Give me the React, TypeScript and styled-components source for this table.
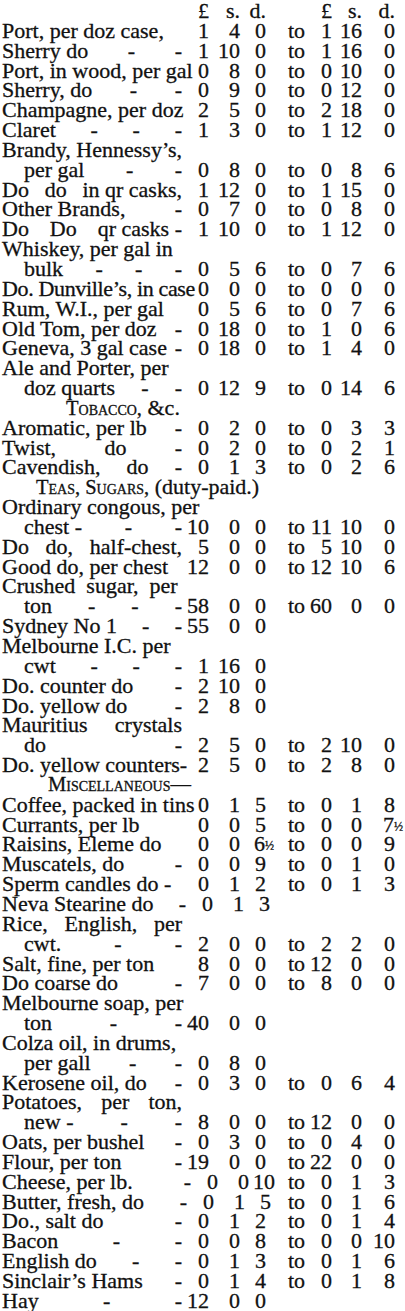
import React from "react";
import styled, { createGlobalStyle } from "styled-components";

const Global = createGlobalStyle`
  html, body { margin: 0; padding: 0; background: #ffffff; }
  body { font-family: "Liberation Serif", "Times New Roman", serif; color: #111111; }
`;

const Page = styled.div`
  width: 405px;
  padding: 1px 0 0 2px;
  box-sizing: border-box;
  font-size: 22px;
  line-height: 19.85px;
  -webkit-text-stroke: 0.3px #111111;
`;

const Row = styled.div<{ $shift?: number }>`
  display: grid;
  grid-template-columns: ${(p) => 184 + (p.$shift || 0)}px 23px 31px 26px ${(p) => 40 - (p.$shift || 0)}px 26px 30px 33px;
  height: 19.85px;
  white-space: nowrap;
`;

const Label = styled.div<{ $indent?: boolean; $spread?: boolean; $tight?: boolean }>`
  display: flex;
  justify-content: ${(p) => (p.$spread ? "space-between" : "flex-start")};
  padding-left: ${(p) => (p.$indent ? "22px" : "0")};
  padding-right: 4px;
  box-sizing: border-box;
  white-space: nowrap;
  letter-spacing: ${(p) => (p.$tight ? "-0.35px" : "0")};
`;

const Num = styled.div`
  text-align: right;
`;

const Frac = styled.span`
  font-size: 12px;
  margin-right: -8px;
  vertical-align: 1px;
`;

const To = styled.div<{ $shift?: number }>`
  padding-left: ${(p) => 22 - (p.$shift || 0)}px;
`;

const HeadCell = styled.div`
  text-align: right;
`;

const Section = styled.div<{ $indent: number }>`
  grid-column: 1 / -1;
  padding-left: ${(p) => p.$indent}px;
  font-size: 20.5px;
  font-variant: small-caps;
`;

const Plain = styled.span`
  font-variant: normal;
  font-size: 22px;
`;

type P = [string, string, string];
type Item = {
  parts: string[];
  indent?: boolean;
  tight?: boolean;
  shift?: number;
  p1?: P;
  p2?: P;
};

type Entry = Item | { section: string; tail?: string; indent: number };

const rows: Entry[] = [
  { parts: ["Port, per doz case,"], p1: ["1", "4", "0"], p2: ["1", "16", "0"] },
  { parts: ["Sherry do", "-", "-"], p1: ["1", "10", "0"], p2: ["1", "16", "0"] },
  { parts: ["Port, in wood, per gal"], p1: ["0", "8", "0"], p2: ["0", "10", "0"] },
  { parts: ["Sherry, do", "-", "-"], p1: ["0", "9", "0"], p2: ["0", "12", "0"] },
  { parts: ["Champagne, per doz"], p1: ["2", "5", "0"], p2: ["2", "18", "0"] },
  { parts: ["Claret", "-", "-", "-"], p1: ["1", "3", "0"], p2: ["1", "12", "0"] },
  { parts: ["Brandy, Hennessy\u2019s,"] },
  { parts: ["per gal", "-", "-"], indent: true, p1: ["0", "8", "0"], p2: ["0", "8", "6"] },
  { parts: ["Do", "do", "in qr casks,"], p1: ["1", "12", "0"], p2: ["1", "15", "0"] },
  { parts: ["Other Brands,", "-"], p1: ["0", "7", "0"], p2: ["0", "8", "0"] },
  { parts: ["Do", "Do", "qr casks -"], p1: ["1", "10", "0"], p2: ["1", "12", "0"] },
  { parts: ["Whiskey, per gal in"] },
  { parts: ["bulk", "-", "-", "-"], indent: true, p1: ["0", "5", "6"], p2: ["0", "7", "6"] },
  { parts: ["Do. Dunville\u2019s, in case"], tight: true, p1: ["0", "0", "0"], p2: ["0", "0", "0"] },
  { parts: ["Rum, W.I., per gal"], p1: ["0", "5", "6"], p2: ["0", "7", "6"] },
  { parts: ["Old Tom, per doz", "-"], p1: ["0", "18", "0"], p2: ["1", "0", "6"] },
  { parts: ["Geneva, 3 gal case", "-"], p1: ["0", "18", "0"], p2: ["1", "4", "0"] },
  { parts: ["Ale and Porter, per"] },
  { parts: ["doz quarts", "-", "-"], indent: true, p1: ["0", "12", "9"], p2: ["0", "14", "6"] },
  { section: "Tobacco,", tail: " &c.", indent: 64 },
  { parts: ["Aromatic, per lb", "-"], p1: ["0", "2", "0"], p2: ["0", "3", "3"] },
  { parts: ["Twist,", "do", "-"], p1: ["0", "2", "0"], p2: ["0", "2", "1"] },
  { parts: ["Cavendish,", "do", "-"], p1: ["0", "1", "3"], p2: ["0", "2", "6"] },
  { section: "Teas, Sugars,", tail: " (duty-paid.)", indent: 34 },
  { parts: ["Ordinary congous, per"] },
  { parts: ["chest -", "-", "-"], indent: true, p1: ["10", "0", "0"], p2: ["11", "10", "0"] },
  { parts: ["Do", "do,", "half-chest,"], p1: ["5", "0", "0"], p2: ["5", "10", "0"] },
  { parts: ["Good do, per chest"], p1: ["12", "0", "0"], p2: ["12", "10", "6"] },
  { parts: ["Crushed\u00a0 sugar,\u00a0 per"] },
  { parts: ["ton", "-", "-", "-"], indent: true, p1: ["58", "0", "0"], p2: ["60", "0", "0"] },
  { parts: ["Sydney No 1", "-", "-"], p1: ["55", "0", "0"] },
  { parts: ["Melbourne I.C. per"] },
  { parts: ["cwt", "-", "-", "-"], indent: true, p1: ["1", "16", "0"] },
  { parts: ["Do. counter do", "-"], p1: ["2", "10", "0"] },
  { parts: ["Do. yellow do", "-"], p1: ["2", "8", "0"] },
  { parts: ["Mauritius", "crystals"] },
  { parts: ["do", "-"], indent: true, p1: ["2", "5", "0"], p2: ["2", "10", "0"] },
  { parts: ["Do. yellow counters-"], p1: ["2", "5", "0"], p2: ["2", "8", "0"] },
  { section: "Miscellaneous\u2014", indent: 46 },
  { parts: ["Coffee, packed in tins"], p1: ["0", "1", "5"], p2: ["0", "1", "8"] },
  { parts: ["Currants, per lb"], p1: ["0", "0", "5"], p2: ["0", "0", "7\u00bd"] },
  { parts: ["Raisins, Eleme do"], p1: ["0", "0", "6\u00bd"], p2: ["0", "0", "9"] },
  { parts: ["Muscatels, do", "-"], p1: ["0", "0", "9"], p2: ["0", "1", "0"] },
  { parts: ["Sperm candles do -"], p1: ["0", "1", "2"], p2: ["0", "1", "3"] },
  { parts: ["Neva Stearine do", "-"], shift: 4, p1: ["0", "1", "3"] },
  { parts: ["Rice,", "English,", "per"] },
  { parts: ["cwt.", "-", "-"], indent: true, p1: ["2", "0", "0"], p2: ["2", "2", "0"] },
  { parts: ["Salt, fine, per ton"], p1: ["8", "0", "0"], p2: ["12", "0", "0"] },
  { parts: ["Do coarse do", "-"], p1: ["7", "0", "0"], p2: ["8", "0", "0"] },
  { parts: ["Melbourne soap, per"] },
  { parts: ["ton", "-", "-"], indent: true, p1: ["40", "0", "0"] },
  { parts: ["Colza oil, in drums,"] },
  { parts: ["per gall", "-", "-"], indent: true, p1: ["0", "8", "0"] },
  { parts: ["Kerosene oil, do", "-"], p1: ["0", "3", "0"], p2: ["0", "6", "4"] },
  { parts: ["Potatoes,", "per", "ton,"] },
  { parts: ["new -", "-", "-"], indent: true, p1: ["8", "0", "0"], p2: ["12", "0", "0"] },
  { parts: ["Oats, per bushel", "-"], p1: ["0", "3", "0"], p2: ["0", "4", "0"] },
  { parts: ["Flour, per ton", "-"], p1: ["19", "0", "0"], p2: ["22", "0", "0"] },
  { parts: ["Cheese, per lb.", "-"], shift: 9, p1: ["0", "0", "10"], p2: ["0", "1", "3"] },
  { parts: ["Butter, fresh, do", "-"], shift: 5, p1: ["0", "1", "5"], p2: ["0", "1", "6"] },
  { parts: ["Do., salt do", "-"], p1: ["0", "1", "2"], p2: ["0", "1", "4"] },
  { parts: ["Bacon", "-", "-"], p1: ["0", "0", "8"], p2: ["0", "0", "10"] },
  { parts: ["English do", "-", "-"], p1: ["0", "1", "3"], p2: ["0", "1", "6"] },
  { parts: ["Sinclair\u2019s Hams", "-"], p1: ["0", "1", "4"], p2: ["0", "1", "8"] },
  { parts: ["Hay", "-", "-"], p1: ["12", "0", "0"] },
];

const Value = ({ v }: { v: string }) => {
  if (v.endsWith("\u00bd")) {
    return (
      <Num>
        {v.slice(0, -1)}
        <Frac>{"\u00bd"}</Frac>
      </Num>
    );
  }
  return <Num>{v}</Num>;
};

const HeaderRow = () => (
  <Row>
    <div />
    <HeadCell>£</HeadCell>
    <HeadCell>s.</HeadCell>
    <HeadCell>d.</HeadCell>
    <div />
    <HeadCell>£</HeadCell>
    <HeadCell>s.</HeadCell>
    <HeadCell>d.</HeadCell>
  </Row>
);

const ItemRow = ({ item }: { item: Item }) => (
  <Row $shift={item.shift}>
    <Label $indent={item.indent} $spread={item.parts.length > 1} $tight={item.tight}>
      {item.parts.map((t, i) => (
        <span key={i}>{t}</span>
      ))}
    </Label>
    {item.p1 ? (
      <>
        <Value v={item.p1[0]} />
        <Value v={item.p1[1]} />
        <Value v={item.p1[2]} />
      </>
    ) : null}
    {item.p2 ? (
      <>
        <To $shift={item.shift}>to</To>
        <Value v={item.p2[0]} />
        <Value v={item.p2[1]} />
        <Value v={item.p2[2]} />
      </>
    ) : null}
  </Row>
);

export default function App() {
  return (
    <Page>
      <Global />
      <HeaderRow />
      {rows.map((r, i) =>
        "section" in r ? (
          <Row key={i}>
            <Section $indent={r.indent}>
              {r.section}
              {r.tail ? <Plain>{r.tail}</Plain> : null}
            </Section>
          </Row>
        ) : (
          <ItemRow key={i} item={r} />
        )
      )}
    </Page>
  );
}
